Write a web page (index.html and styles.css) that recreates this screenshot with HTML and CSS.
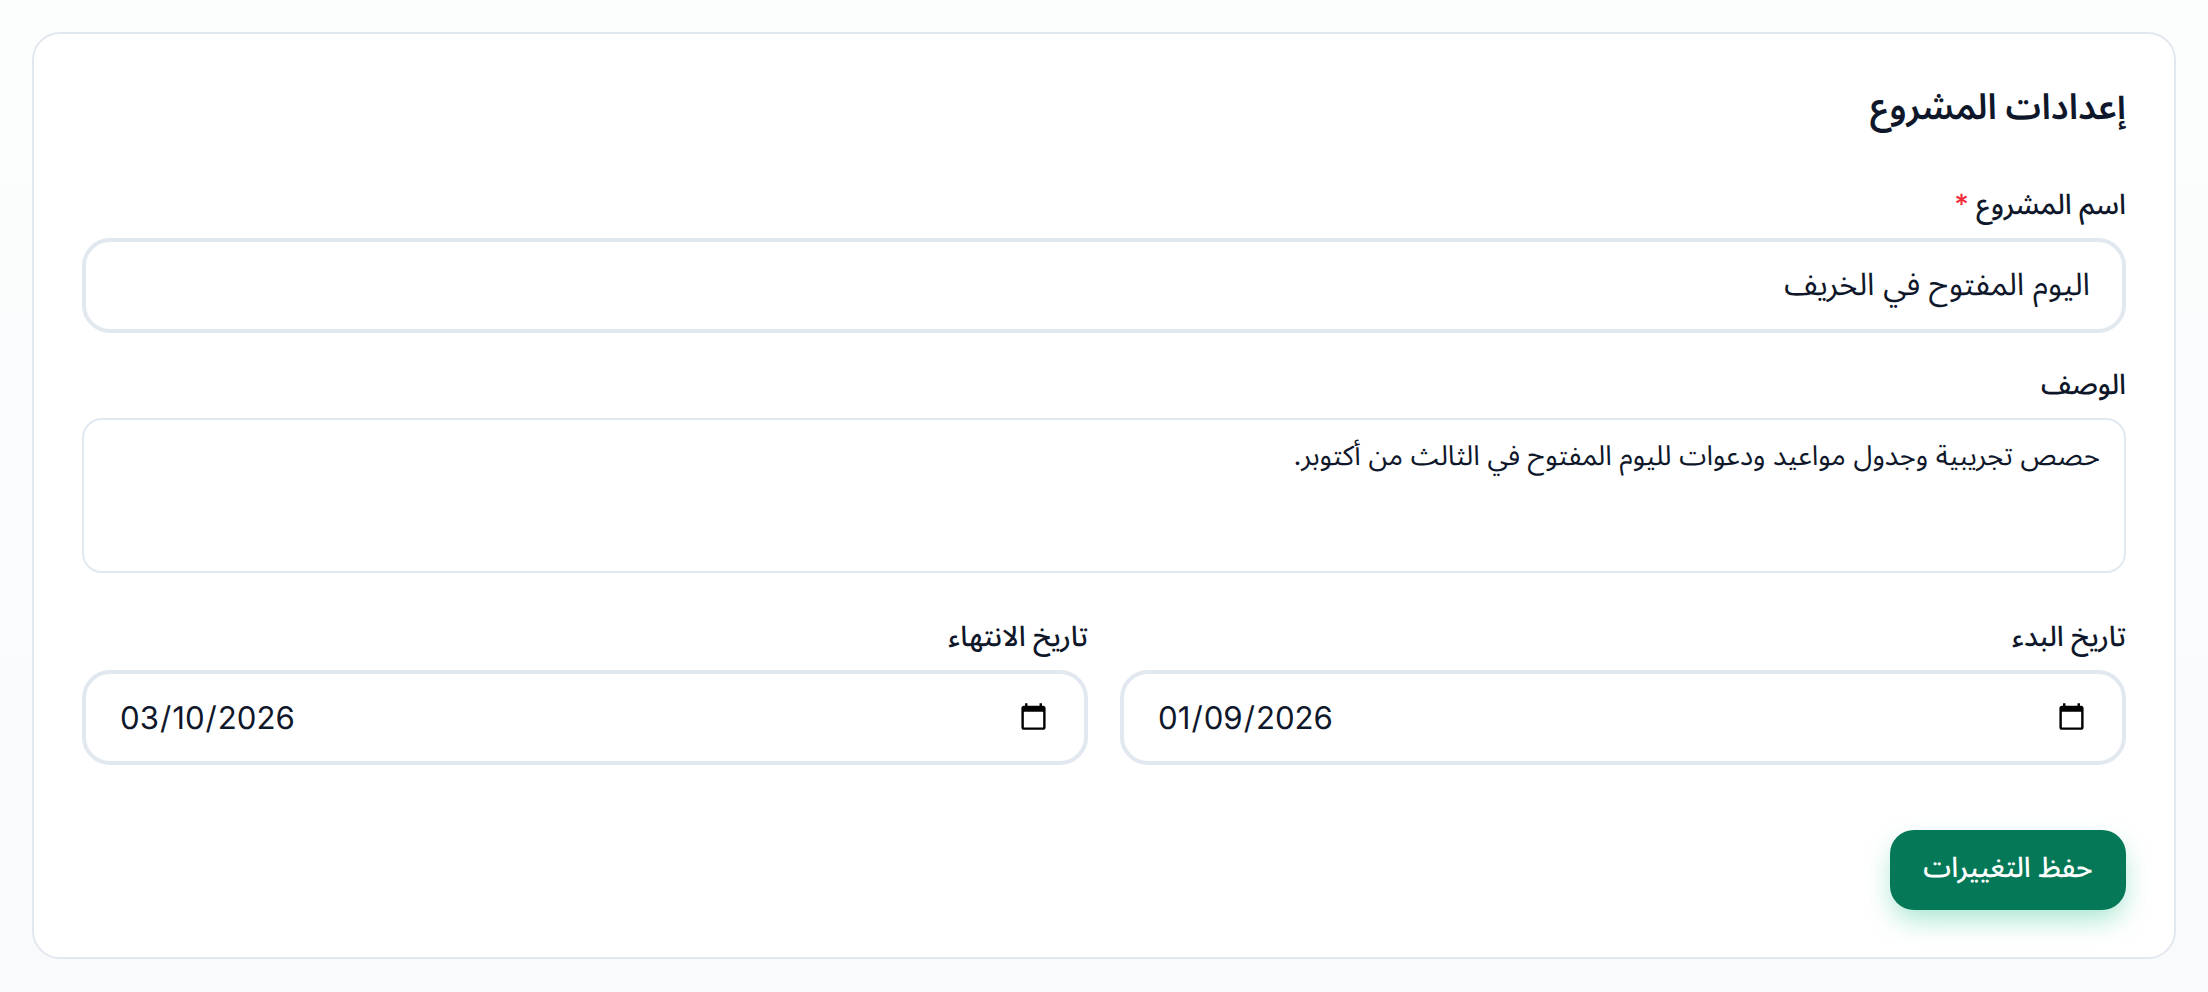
FILE: index.html
```html
<!DOCTYPE html>
<html lang="ar" dir="rtl">
<head>
<meta charset="utf-8">
<title>إعدادات المشروع</title>
<link rel="stylesheet" href="styles.css">
</head>
<body>
<main class="card">
  <h1 class="title">إعدادات المشروع</h1>
  <form class="form">
    <div class="field">
      <label class="label" for="name">اسم المشروع <span class="req">*</span></label>
      <input class="control" id="name" type="text" value="اليوم المفتوح في الخريف">
    </div>
    <div class="field">
      <label class="label" for="desc">الوصف</label>
      <textarea class="area" id="desc">حصص تجريبية وجدول مواعيد ودعوات لليوم المفتوح في الثالث من أكتوبر.</textarea>
    </div>
    <div class="dates">
      <div class="field">
        <label class="label" for="start">تاريخ البدء</label>
        <input class="control date" id="start" type="date" value="2026-01-09">
      </div>
      <div class="field">
        <label class="label" for="end">تاريخ الانتهاء</label>
        <input class="control date" id="end" type="date" value="2026-03-10">
      </div>
    </div>
    <div class="actions">
      <button class="save" type="button">حفظ التغييرات</button>
    </div>
  </form>
</main>
</body>
</html>
```
FILE: styles.css
```css
* { box-sizing: border-box; }
html, body { margin: 0; height: 100%; }
body {
  padding: 32px;
  background: linear-gradient(180deg, #fcfdfd 0%, #f8fafc 100%);
  color: #0f172a;
  font-family: Inter, "Noto Sans Arabic", sans-serif;
  text-rendering: geometricPrecision;
}
.card {
  height: 927px;
  padding: 48px;
  background: #fff;
  border: 2px solid #e2e8f0;
  border-radius: 28px;
}
.title {
  margin: 0 0 52px;
  font-size: 35.6px;
  line-height: 50px;
  font-weight: 600;
}
.form { display: flex; flex-direction: column; }
.field { display: flex; flex-direction: column; gap: 14px; margin-bottom: 31px; }
.label {
  font-size: 28px;
  line-height: 40px;
  font-weight: 500;
}
.req { color: #ef2b3c; }
.control {
  height: 95px;
  padding: 0 32px;
  border: 4px solid #e2e8f0;
  border-radius: 28px;
  background: #fff;
  color: #0f172a;
  font: 400 31.2px Inter, "Noto Sans Arabic", sans-serif;
  text-rendering: geometricPrecision;
  outline: none;
}
.date { direction: ltr; text-align: left; padding: 0 33px; }
.area {
  height: 155px;
  padding: 15px 24px;
  border: 2px solid #e2e8f0;
  border-radius: 20px;
  background: #fff;
  color: #0f172a;
  font: 400 27.5px/40px Inter, "Noto Sans Arabic", sans-serif;
  text-rendering: geometricPrecision;
  resize: none;
  outline: none;
}
.dates { display: grid; grid-template-columns: 1fr 1fr; gap: 32px; margin-top: 12px; }
.actions { display: flex; justify-content: flex-start; margin-top: 34px; }
.save {
  width: 236px;
  height: 80px;
  padding: 0 0 3px;
  border: 0;
  border-radius: 24px;
  background: #047857;
  color: #fff;
  font: 550 28px Inter, "Noto Sans Arabic", sans-serif;
  text-rendering: geometricPrecision;
  box-shadow: 0 12px 28px -4px rgba(16, 185, 129, 0.4);
}
```
